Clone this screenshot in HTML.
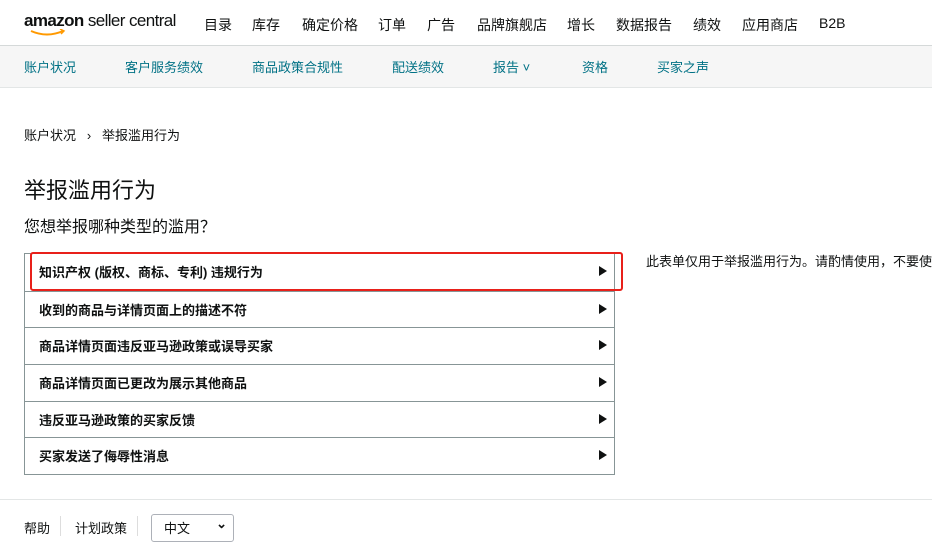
<!DOCTYPE html>
<html><head><meta charset="utf-8"><style>
*{margin:0;padding:0;box-sizing:border-box}
body{width:932px;height:535px;overflow:hidden;background:#fff;font-family:"Liberation Sans","Noto Sans CJK SC",sans-serif;color:#0f1111;position:relative}
.a{position:absolute;white-space:nowrap}
.top{height:46px;border-bottom:1px solid #d5d9d9}
.sub{position:absolute;top:46px;left:0;width:932px;height:42px;background:#f6f6f6;border-bottom:1px solid #e3e6e6}
.n{font-size:14px;top:15px;color:#0f1111}
.s{font-size:13px;top:57px;color:#007185}
.box{position:absolute;left:24px;top:253px;width:591px;height:222px;border:1px solid #879596}
.row{position:relative;height:36.67px;border-top:1px solid #879596;font-size:13px;font-weight:bold;padding:8px 0 0 14px;color:#0f1111}
.row:first-child{border-top:none}
.row:after{content:"";position:absolute;right:7px;top:12px;border-left:8px solid #0f1111;border-top:5px solid transparent;border-bottom:5px solid transparent}
</style></head><body>
<div class="top"></div>
<div class="a" style="left:24px;top:11px;font-size:17px;letter-spacing:-0.6px"><b>amazon</b> seller central</div>
<svg class="a" style="left:30px;top:29px" width="36" height="8"><path d="M1 2 Q17 9 33 2" stroke="#f90" stroke-width="2" fill="none"/><path d="M30 0 L34 2 L31 5" stroke="#f90" stroke-width="1.5" fill="none"/></svg>
<span class="a n" style="left:204px">目录</span><span class="a n" style="left:252px">库存</span><span class="a n" style="left:302px">确定价格</span><span class="a n" style="left:378px">订单</span><span class="a n" style="left:427px">广告</span><span class="a n" style="left:477px">品牌旗舰店</span><span class="a n" style="left:567px">增长</span><span class="a n" style="left:616px">数据报告</span><span class="a n" style="left:693px">绩效</span><span class="a n" style="left:742px">应用商店</span><span class="a n" style="left:819px">B2B</span>
<div class="sub"></div>
<span class="a s" style="left:24px">账户状况</span><span class="a s" style="left:125px">客户服务绩效</span><span class="a s" style="left:252px">商品政策合规性</span><span class="a s" style="left:392px">配送绩效</span><span class="a s" style="left:493px">报告 ˅</span><span class="a s" style="left:582px">资格</span><span class="a s" style="left:657px">买家之声</span>
<span class="a" style="left:24px;top:125px;font-size:13px;color:#0f1111">账户状况 &nbsp;&nbsp;›&nbsp;&nbsp; 举报滥用行为</span>
<span class="a" style="left:24px;top:173px;font-size:22px">举报滥用行为</span>
<span class="a" style="left:24px;top:213px;font-size:16px">您想举报哪种类型的滥用？</span>
<div class="box">
<div class="row">知识产权 (版权、商标、专利) 违规行为</div>
<div class="row">收到的商品与详情页面上的描述不符</div>
<div class="row">商品详情页面违反亚马逊政策或误导买家</div>
<div class="row">商品详情页面已更改为展示其他商品</div>
<div class="row">违反亚马逊政策的买家反馈</div>
<div class="row">买家发送了侮辱性消息</div>
</div>
<div class="a" style="left:30px;top:252px;width:593px;height:39px;border:2px solid #e8201a;border-radius:3px"></div>
<span class="a" style="left:646px;top:251px;font-size:13px">此表单仅用于举报滥用行为。请酌情使用，不要使</span>
<div class="a" style="left:0;top:499px;width:932px;border-top:1px solid #e3e6e6"></div>
<span class="a" style="left:24px;top:518px;font-size:13px">帮助</span>
<div class="a" style="left:60px;top:516px;height:20px;border-left:1px solid #ddd"></div>
<span class="a" style="left:75px;top:518px;font-size:13px">计划政策</span>
<div class="a" style="left:137px;top:516px;height:20px;border-left:1px solid #ddd"></div>
<div class="a" style="left:151px;top:514px;width:83px;height:28px;border:1px solid #adb1b8;border-radius:3px;font-size:13px;padding:3px 0 0 12px">中文<span style="position:absolute;right:6px;top:1px;font-weight:bold">⌄</span></div>
</body></html>
